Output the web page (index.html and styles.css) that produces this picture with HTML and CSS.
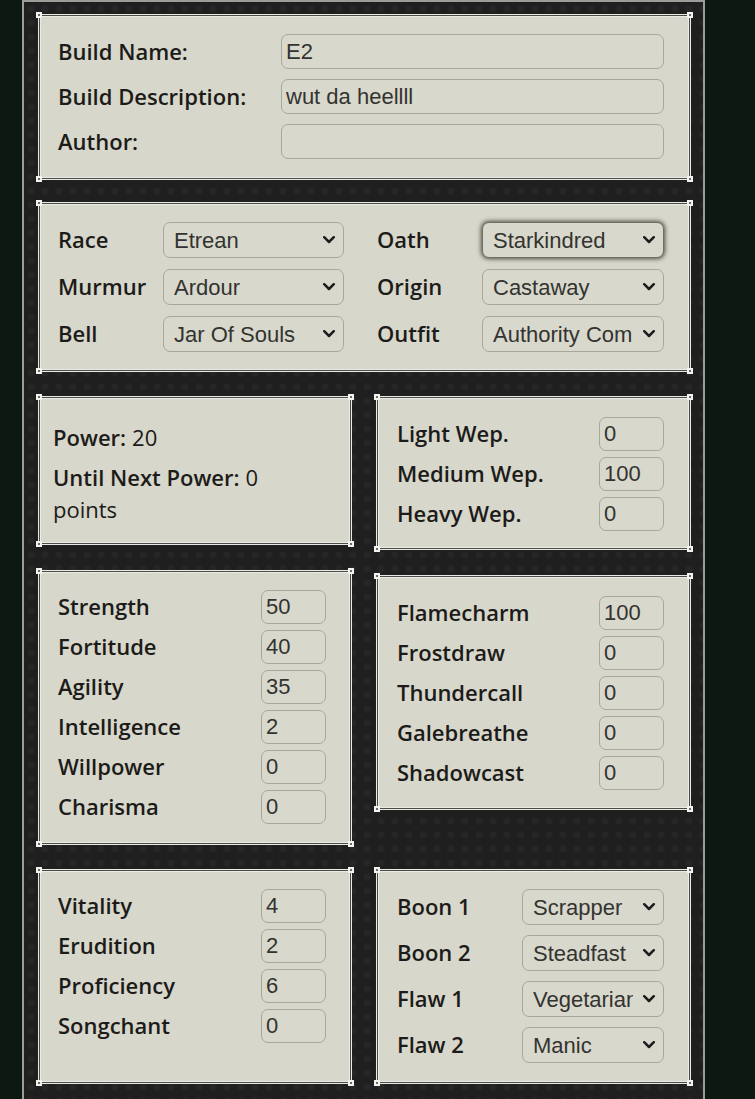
FILE: index.html
```html
<!DOCTYPE html>
<html lang="en">
<head>
<meta charset="utf-8">
<title>Build Planner</title>
<link rel="stylesheet" href="styles.css">
</head>
<body>
<div class="sheet">
  <section class="panel p-build">
    <div class="build-grid">
      <label class="lbl">Build Name:</label><input class="field" type="text" value="E2">
      <label class="lbl">Build Description:</label><input class="field" type="text" value="wut da heellll">
      <label class="lbl">Author:</label><input class="field" type="text" value="">
    </div>
  </section>

  <section class="panel p-char">
    <div class="sel-grid">
      <label class="lbl">Race</label>
      <span class="sel"><select><option>Etrean</option></select><svg class="chev" viewBox="0 0 12 8"><polyline points="1.2,1.2 6,6 10.8,1.2"/></svg></span>
      <label class="lbl">Murmur</label>
      <span class="sel"><select><option>Ardour</option></select><svg class="chev" viewBox="0 0 12 8"><polyline points="1.2,1.2 6,6 10.8,1.2"/></svg></span>
      <label class="lbl">Bell</label>
      <span class="sel"><select><option>Jar Of Souls</option></select><svg class="chev" viewBox="0 0 12 8"><polyline points="1.2,1.2 6,6 10.8,1.2"/></svg></span>
    </div>
    <div class="sel-grid">
      <label class="lbl">Oath</label>
      <span class="sel sel-focus"><select><option>Starkindred</option></select><svg class="chev" viewBox="0 0 12 8"><polyline points="1.2,1.2 6,6 10.8,1.2"/></svg></span>
      <label class="lbl">Origin</label>
      <span class="sel"><select><option>Castaway</option></select><svg class="chev" viewBox="0 0 12 8"><polyline points="1.2,1.2 6,6 10.8,1.2"/></svg></span>
      <label class="lbl">Outfit</label>
      <span class="sel"><select><option>Authority Combat Uniform</option></select><svg class="chev" viewBox="0 0 12 8"><polyline points="1.2,1.2 6,6 10.8,1.2"/></svg></span>
    </div>
  </section>

  <div class="cols">
    <div class="col">
      <section class="panel p-power">
        <p class="stat"><b>Power:</b><span class="val">20</span></p>
        <p class="stat stat-wrap"><b>Until Next Power:</b><span class="val">0</span> <span class="val">points</span></p>
      </section>
      <section class="panel p-attr">
        <div class="num-grid">
          <label class="lbl">Strength</label><input class="field num" type="text" value="50">
          <label class="lbl">Fortitude</label><input class="field num" type="text" value="40">
          <label class="lbl">Agility</label><input class="field num" type="text" value="35">
          <label class="lbl">Intelligence</label><input class="field num" type="text" value="2">
          <label class="lbl">Willpower</label><input class="field num" type="text" value="0">
          <label class="lbl">Charisma</label><input class="field num" type="text" value="0">
        </div>
      </section>
    </div>
    <div class="col">
      <section class="panel p-wep">
        <div class="num-grid">
          <label class="lbl">Light Wep.</label><input class="field num" type="text" value="0">
          <label class="lbl">Medium Wep.</label><input class="field num" type="text" value="100">
          <label class="lbl">Heavy Wep.</label><input class="field num" type="text" value="0">
        </div>
      </section>
      <section class="panel p-elem">
        <div class="num-grid">
          <label class="lbl">Flamecharm</label><input class="field num" type="text" value="100">
          <label class="lbl">Frostdraw</label><input class="field num" type="text" value="0">
          <label class="lbl">Thundercall</label><input class="field num" type="text" value="0">
          <label class="lbl">Galebreathe</label><input class="field num" type="text" value="0">
          <label class="lbl">Shadowcast</label><input class="field num" type="text" value="0">
        </div>
      </section>
    </div>
  </div>

  <div class="row5">
    <section class="panel p-misc">
      <div class="num-grid">
        <label class="lbl">Vitality</label><input class="field num" type="text" value="4">
        <label class="lbl">Erudition</label><input class="field num" type="text" value="2">
        <label class="lbl">Proficiency</label><input class="field num" type="text" value="6">
        <label class="lbl">Songchant</label><input class="field num" type="text" value="0">
      </div>
    </section>
    <section class="panel p-boons">
      <div class="boon-grid">
        <label class="lbl">Boon 1</label>
        <span class="sel"><select><option>Scrapper</option></select><svg class="chev" viewBox="0 0 12 8"><polyline points="1.2,1.2 6,6 10.8,1.2"/></svg></span>
        <label class="lbl">Boon 2</label>
        <span class="sel"><select><option>Steadfast</option></select><svg class="chev" viewBox="0 0 12 8"><polyline points="1.2,1.2 6,6 10.8,1.2"/></svg></span>
        <label class="lbl">Flaw 1</label>
        <span class="sel"><select><option>Vegetarian</option></select><svg class="chev" viewBox="0 0 12 8"><polyline points="1.2,1.2 6,6 10.8,1.2"/></svg></span>
        <label class="lbl">Flaw 2</label>
        <span class="sel"><select><option>Manic</option></select><svg class="chev" viewBox="0 0 12 8"><polyline points="1.2,1.2 6,6 10.8,1.2"/></svg></span>
      </div>
    </section>
  </div>
</div>
</body>
</html>
```
FILE: styles.css
```css
html, body {
  margin: 0;
  padding: 0;
  background: #0e1813;
}

body {
  font-family: "Open Sans", "Liberation Sans", sans-serif;
  color: #1b1b1b;
}

.sheet {
  margin-left: 22px;
  width: 653px;
  min-height: 1085px;
  border: 2px solid #9c9c98;
  border-bottom: none;
  background-color: #1f1f1f;
  background-image:
    radial-gradient(circle at 50% 50%, rgba(255,255,255,0.03) 0 3px, transparent 4px);
  background-size: 14px 14px;
  padding: 12px 12px 0 14px;
  box-sizing: content-box;
}

.panel {
  position: relative;
  background: #d7d7cb;
  border: 1px solid #ebebe5;
  box-shadow: inset 0 0 0 1px #4a4a46, inset 0 0 0 2px #ebebe5;
}

.panel::before {
  content: "";
  position: absolute;
  top: -3px;
  left: -3px;
  right: -3px;
  bottom: -3px;
  pointer-events: none;
  background:
    linear-gradient(#6a6a66, #6a6a66) left 2px top 2px / 2px 2px no-repeat,
    linear-gradient(#6a6a66, #6a6a66) right 2px top 2px / 2px 2px no-repeat,
    linear-gradient(#6a6a66, #6a6a66) left 2px bottom 2px / 2px 2px no-repeat,
    linear-gradient(#6a6a66, #6a6a66) right 2px bottom 2px / 2px 2px no-repeat,
    linear-gradient(#f2f2ee, #f2f2ee) left top / 6px 6px no-repeat,
    linear-gradient(#f2f2ee, #f2f2ee) right top / 6px 6px no-repeat,
    linear-gradient(#f2f2ee, #f2f2ee) left bottom / 6px 6px no-repeat,
    linear-gradient(#f2f2ee, #f2f2ee) right bottom / 6px 6px no-repeat;
}

.lbl {
  font-family: "Open Sans", "Liberation Sans", sans-serif;
  font-weight: 600;
  font-size: 22px;
  line-height: 1;
  color: #1c1b19;
  white-space: nowrap;
  display: flex;
  align-items: center;
  padding-bottom: 2px;
}

.field {
  box-sizing: border-box;
  height: 35px;
  margin: 0;
  border: 1px solid #a9a898;
  border-radius: 7px;
  background: #d8d8cc;
  font-family: "Liberation Sans", Arial, sans-serif;
  font-size: 22px;
  color: #333330;
  padding: 0 4px;
  outline: none;
  width: 100%;
}

.field.num {
  height: 34px;
}

/* panel 1 */
.p-build {
  padding: 19px 26px 20px 19px;
  margin-bottom: 22px;
}

.build-grid {
  display: grid;
  grid-template-columns: 223px 1fr;
  row-gap: 10px;
}

/* panel 2 */
.p-char {
  padding: 19px 26px 19px 19px;
  margin-bottom: 24px;
  display: grid;
  grid-template-columns: 286px 287px;
  column-gap: 33px;
}

.sel-grid {
  display: grid;
  grid-template-columns: 105px 1fr;
  row-gap: 11px;
}

.sel {
  position: relative;
  display: block;
  height: 36px;
}

.sel select {
  appearance: none;
  -webkit-appearance: none;
  box-sizing: border-box;
  width: 100%;
  height: 36px;
  margin: 0;
  border: 1px solid #a9a898;
  border-radius: 7px;
  background: #d8d8cc;
  font-family: "Liberation Sans", Arial, sans-serif;
  font-size: 22px;
  color: #333330;
  padding: 0 30px 0 10px;
  outline: none;
}

.sel-focus select {
  border-color: #6f6f64;
  box-shadow: 0 0 4px 1px rgba(55, 55, 40, 0.85);
}

.chev {
  position: absolute;
  right: 9px;
  top: 50%;
  width: 12px;
  height: 8px;
  margin-top: -4px;
  fill: none;
  stroke: #1e1e1e;
  stroke-width: 2.5;
  stroke-linecap: round;
  stroke-linejoin: round;
  pointer-events: none;
}

/* two stacked columns */
.cols {
  display: grid;
  grid-template-columns: 314px 315px;
  column-gap: 24px;
  align-items: start;
}

.col {
  display: flex;
  flex-direction: column;
  gap: 25px;
}

.row5 {
  margin-top: 24px;
  display: grid;
  grid-template-columns: 314px 315px;
  column-gap: 24px;
  align-items: stretch;
}

.num-grid {
  display: grid;
  grid-template-columns: 1fr 65px;
  row-gap: 6px;
}

.p-power {
  padding: 24px 20px 19px 14px;
}

.stat {
  margin: 0;
  font-family: "Open Sans", "Liberation Sans", sans-serif;
  font-size: 22px;
  line-height: 32px;
  color: #1c1b19;
}

.stat b {
  font-weight: 600;
  margin-right: 6px;
}

.stat + .stat {
  margin-top: 8px;
}

.stat-wrap {
  max-width: 240px;
}

.p-wep {
  padding: 20px 26px 18px 20px;
}

.p-attr {
  padding: 19px 25px 20px 19px;
}

.p-elem {
  padding: 20px 26px 19px 20px;
}

.p-misc {
  padding: 19px 25px 20px 19px;
}

.p-boons {
  padding: 19px 26px 20px 20px;
}

.boon-grid {
  display: grid;
  grid-template-columns: 125px 142px;
  row-gap: 10px;
}
```
